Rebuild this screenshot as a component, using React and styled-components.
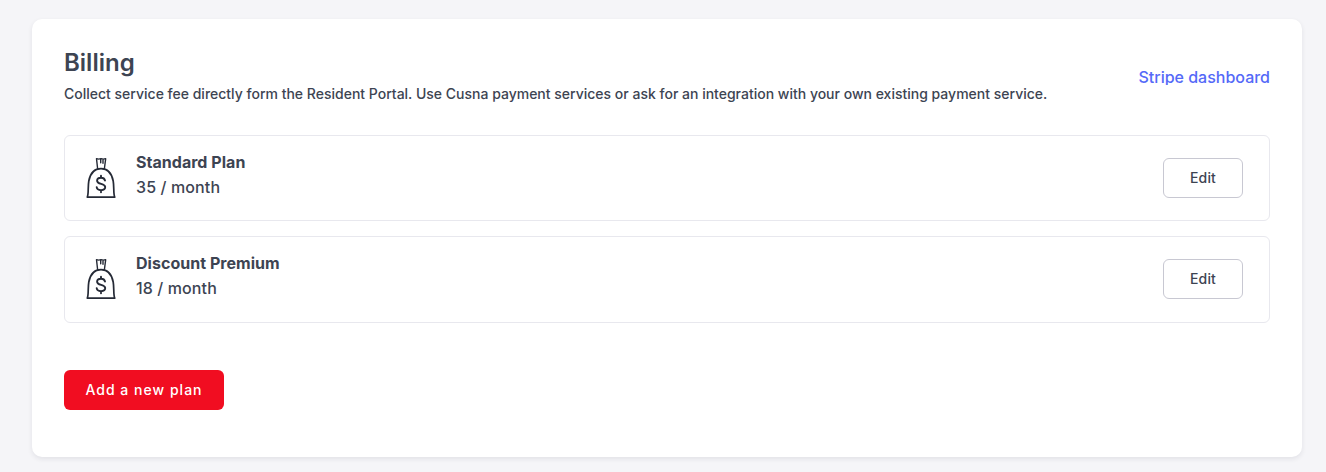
import React from "react";
import styled, { createGlobalStyle } from "styled-components";

const GlobalStyle = createGlobalStyle`
  * { box-sizing: border-box; }
  body {
    margin: 0;
    background: #f5f5f8;
    color: #3d4452;
    font-family: Inter, "Liberation Sans", sans-serif;
  }
  h1, h2, p { margin: 0; }
`;

const Page = styled.main`
  height: 472px;
  padding: 19px 24px 15px 32px;
`;

const Card = styled.section`
  height: 438px;
  padding: 28px 32px 0;
  background: #fff;
  border-radius: 10px;
  box-shadow: 0 2px 5px rgba(30, 30, 50, 0.09);
`;

const Header = styled.header`
  display: flex;
  justify-content: space-between;
  height: 88px;
`;

const Title = styled.h1`
  font-size: 24px;
  line-height: 32px;
  font-weight: 600;
`;

const Description = styled.p`
  margin-top: 5px;
  font-size: 14px;
  line-height: 20px;
  font-weight: 500;
  white-space: nowrap;
`;

const DashboardLink = styled.a`
  height: 16px;
  margin-top: 22px;
  overflow: hidden;
  color: #5469f8;
  font-size: 16px;
  line-height: 16px;
  font-weight: 500;
  white-space: nowrap;
`;

const PlanList = styled.div`
  display: grid;
  gap: 15px;
`;

const PlanRow = styled.article`
  display: flex;
  align-items: flex-start;
  height: ${(p) => p.$height}px;
  padding: 0 26px 0 21px;
  border: 1px solid #e8e8ee;
  border-radius: 6px;
`;

const BagSvg = styled.svg`
  width: 30px;
  height: 42px;
  margin-top: 21px;
  flex: none;
`;

const PlanText = styled.div`
  flex: 1;
  margin: 14px 0 0 20px;
  font-size: 16px;
  line-height: 25px;
`;

const PlanName = styled.h2`
  font-size: 16px;
  line-height: 25px;
  font-weight: 700;
  letter-spacing: 0.03px;
`;

const Price = styled.p`
  font-weight: 500;
  letter-spacing: 0.12px;
`;

const Button = styled.button`
  height: 40px;
  padding: 0 0 2px;
  border-radius: 6px;
  font-family: inherit;
  font-size: 14px;
  font-weight: 500;
`;

const EditButton = styled(Button)`
  width: 80px;
  margin-top: 22px;
  border: 1px solid #c8c8d2;
  background: #fff;
  color: #3d4452;
  letter-spacing: 0.2px;
`;

const AddButton = styled(Button)`
  display: block;
  width: 160px;
  margin-top: 47px;
  border: 0;
  background: #f10d21;
  color: #fff;
  letter-spacing: 1.02px;
`;

const MoneyBag = () => (
  <BagSvg viewBox="0 0 30 42" fill="none" stroke="#252a36" strokeWidth="1.7" strokeLinecap="round" strokeLinejoin="round">
    <path d="M11.6 11.500 10.500 1.700c1.500.6 2.900.6 4.500 0 1.600.6 3 .6 4.700 0L18.400 11.500M14.700 2v3.800M17 2.500v3.800" strokeWidth="1.4" />
    <path d="M15 11.700C8.500 11.700 4.300 16.500 2.800 24c-.6 3.500-.5 7.500-.7 11.500-.1 2-.3 3.500-.8 4.700h27.400c-.5-1.200-.7-2.700-.8-4.700-.2-4-.1-8-.7-11.500C25.700 16.500 21.500 11.700 15 11.700Z" />
    <path d="M19 23.500c-.4-1.700-1.900-2.700-4-2.700-2.300 0-3.900 1.100-3.900 2.900 0 4.300 8.100 2.100 8.100 6.400 0 2-1.700 3.100-4.200 3.100-2.400 0-4-1.100-4.300-3M15 18.800v2M15 33.200v2" strokeWidth="1.9" />
  </BagSvg>
);

const plans = [
  { name: "Standard Plan", price: "35 / month", height: 86 },
  { name: "Discount Premium", price: "18 / month", height: 87 },
];

export default function App() {
  return (
    <>
      <GlobalStyle />
      <Page>
        <Card>
          <Header>
            <div>
              <Title>Billing</Title>
              <Description>
                Collect service fee directly form the Resident Portal. Use Cusna payment services or ask for an integration with your own existing payment service.
              </Description>
            </div>
            <DashboardLink>Stripe dashboard</DashboardLink>
          </Header>
          <PlanList>
            {plans.map((plan) => (
              <PlanRow key={plan.name} $height={plan.height}>
                <MoneyBag />
                <PlanText>
                  <PlanName>{plan.name}</PlanName>
                  <Price>{plan.price}</Price>
                </PlanText>
                <EditButton>Edit</EditButton>
              </PlanRow>
            ))}
          </PlanList>
          <AddButton>Add a new plan</AddButton>
        </Card>
      </Page>
    </>
  );
}
